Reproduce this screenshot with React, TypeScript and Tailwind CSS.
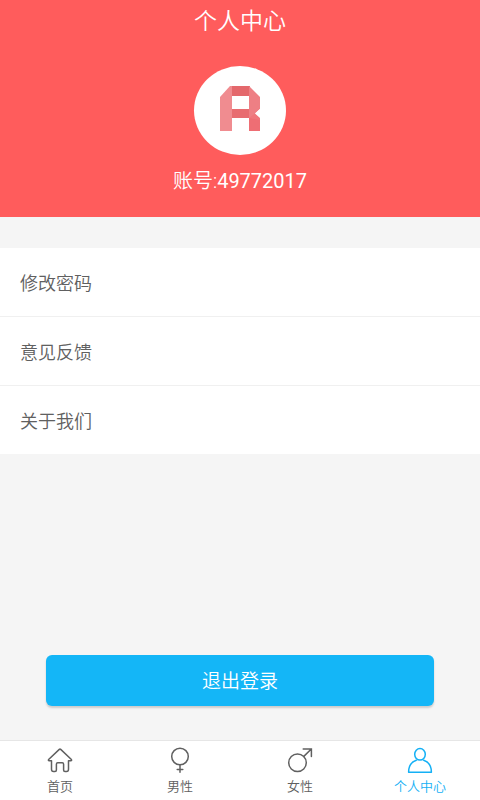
import type { ReactNode } from "react";

const menu = ["修改密码", "意见反馈", "关于我们"];

function Icon({ children }: { children: ReactNode }) {
  return (
    <svg
      viewBox="0 0 26 26"
      className="size-[26px]"
      fill="none"
      stroke="currentColor"
      strokeWidth="1.5"
      strokeLinejoin="round"
      strokeLinecap="round"
      aria-hidden="true"
    >
      {children}
    </svg>
  );
}

const tabs = [
  {
    label: "首页",
    active: false,
    icon: (
      <path d="M12.300 2.400 1.600 12.500q-.6 1.200.6 1.300h2.300v8.400q0 2.300 2 2.300h1.500q1.400 0 1.400-1.500v-5.800q0-1.400 1.300-1.400h4.600q1.300 0 1.300 1.400v5.800q0 1.500 1.400 1.500h1.500q2 0 2-2.300v-8.400h2.300q1.200-.1.600-1.300L13.700 2.400q-.7-.6-1.400 0Z" />
    ),
  },
  {
    label: "男性",
    active: false,
    icon: (
      <>
        <circle cx="13" cy="9.500" r="8.300" />
        <path d="M13 17.800v7.400M10.200 22.500h5.600" />
      </>
    ),
  },
  {
    label: "女性",
    active: false,
    icon: (
      <>
        <circle cx="10.500" cy="15.700" r="8.800" />
        <path d="M16.800 9.400 24.300 2M16.200 2h8.200v7.500" strokeLinejoin="miter" />
      </>
    ),
  },
  {
    label: "个人中心",
    active: true,
    icon: (
      <>
        <ellipse cx="13" cy="7.300" rx="5.300" ry="5.800" />
        <path d="M9.300 13.200C5 14.700 1.600 18.800 1.600 25.200h22.800c0-6.400-3.400-10.500-7.700-12" />
      </>
    ),
  },
];

function Logo() {
  return (
    <svg viewBox="0 0 40 46" className="h-[46px] w-10" aria-hidden="true">
      <path d="M10 0h20v10H10z" fill="#e4686c" />
      <path d="M10 23h20v9H10z" fill="#e86c70" />
      <path d="M10 0h2v45H0V11Z" fill="#f08c90" />
      <path d="M29 32h1l10-1v14H29z" fill="#ee6e74" />
      <path d="M29 24l6 3 5 4v3l-11-2z" fill="#f0767b" />
      <path d="M29 0l11 11v12l-5 4.500-6 4.500z" fill="#ee7f84" />
      <path d="M35 27.500 40 23v9z" fill="#fff" />
    </svg>
  );
}

export default function App() {
  return (
    <div className="flex min-h-screen flex-col bg-[#f5f5f5] font-[Roboto,'Noto_Sans_CJK_SC',sans-serif] font-[350] text-[#606060]">
      <header className="flex flex-col items-center bg-[#ff5c5c] pt-1 pb-[22px] text-white">
        <h1 className="text-[23px] leading-9 font-[350]">个人中心</h1>
        <div className="mt-[26px] flex h-[89px] w-[92px] items-center justify-center rounded-[50%] bg-white pb-1">
          <Logo />
        </div>
        <p className="mt-3 text-[20px] leading-7">
          账号:<span className="font-normal">49772017</span>
        </p>
      </header>

      <main className="flex flex-1 flex-col">
        <ul className="mt-[31px] divide-y divide-[#f0f0f0] bg-white">
          {menu.map((item) => (
            <li key={item}>
              <button type="button" className="block h-[68px] w-full px-5 pt-0.5 text-left text-[18px]">
                {item}
              </button>
            </li>
          ))}
        </ul>
        <div className="mt-auto px-[46px] pt-8 pb-[34px]">
          <button
            type="button"
            className="block h-[51px] w-full rounded-md bg-[#14b6f7] pt-1 text-[19px] text-white shadow-[0_2px_2px_#cccccc]"
          >
            退出登录
          </button>
        </div>
      </main>

      <nav className="grid grid-cols-4 border-t border-[#e6e6e6] bg-white">
        {tabs.map((tab) => (
          <a
            key={tab.label}
            href="#"
            aria-current={tab.active ? "page" : undefined}
            className={`flex flex-col items-center pt-1.5 pb-[3px] ${tab.active ? "text-[#14b0f5]" : "text-[#606060]"}`}
          >
            <Icon>{tab.icon}</Icon>
            <span className="mt-1 text-[13px] leading-5">{tab.label}</span>
          </a>
        ))}
      </nav>
    </div>
  );
}
